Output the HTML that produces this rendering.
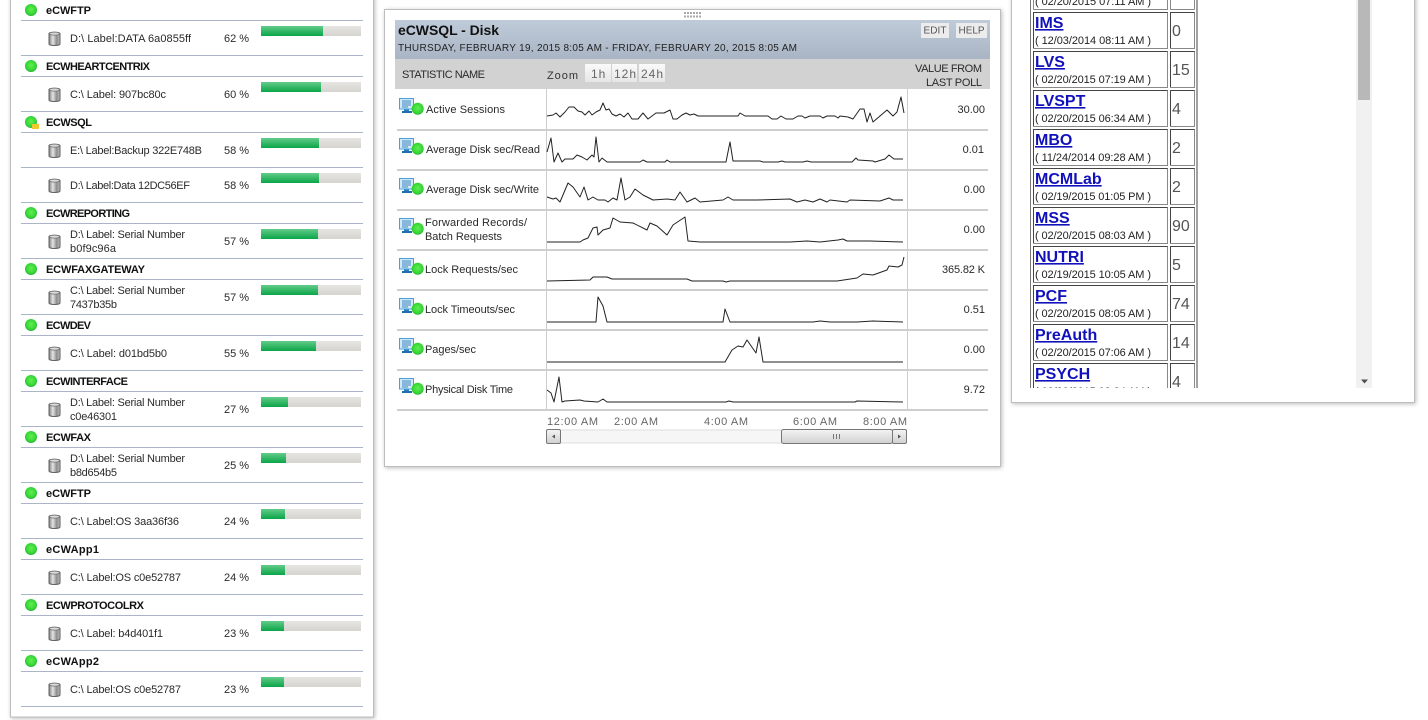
<!DOCTYPE html>
<html><head><meta charset="utf-8"><title>eCWSQL - Disk</title>
<style>
html,body{margin:0;padding:0;background:#fff;width:1428px;height:720px;overflow:hidden}
svg{display:block;position:absolute;left:0;top:0}
text{font-family:"Liberation Sans",Arial,sans-serif;font-size:11px;fill:#2a2a2a}
.h{font-weight:bold;fill:#111;font-size:11px}
.p{fill:#333}
.s{fill:none;stroke:#222;stroke-width:1;stroke-linejoin:round}
.l{font-weight:bold;font-size:16px;fill:#1111bb;text-decoration:underline}
.d{font-size:11px;fill:#222}
.c{font-size:16px;fill:#555}
.t{fill:#666}
.v{text-anchor:end}
</style></head><body>
<svg width="1428" height="720" viewBox="0 0 1428 720" xmlns="http://www.w3.org/2000/svg">
<defs>
<radialGradient id="gb" cx="50%" cy="45%" r="58%"><stop offset="0" stop-color="#62ee50"/><stop offset=".7" stop-color="#35d735"/><stop offset="1" stop-color="#22a838"/></radialGradient>
<linearGradient id="bar" x1="0" y1="0" x2="0" y2="1"><stop offset="0" stop-color="#63cc8a"/><stop offset="1" stop-color="#0aa548"/></linearGradient>
<linearGradient id="trk" x1="0" y1="0" x2="0" y2="1"><stop offset="0" stop-color="#e6e5e2"/><stop offset="1" stop-color="#d5d4cf"/></linearGradient>
<linearGradient id="hd" x1="0" y1="0" x2="0" y2="1"><stop offset="0" stop-color="#bfcbd9"/><stop offset="1" stop-color="#a9b5c4"/></linearGradient>
<linearGradient id="th" x1="0" y1="0" x2="0" y2="1"><stop offset="0" stop-color="#f4f4f4"/><stop offset="1" stop-color="#d0d0d0"/></linearGradient>
<linearGradient id="zb" x1="0" y1="0" x2="0" y2="1"><stop offset="0" stop-color="#fafafa"/><stop offset="1" stop-color="#e6e6e6"/></linearGradient>
<linearGradient id="cy" x1="0" y1="0" x2="1" y2="0"><stop offset="0" stop-color="#7f7f7f"/><stop offset=".35" stop-color="#e4e4e4"/><stop offset=".7" stop-color="#8c8c8c"/><stop offset="1" stop-color="#c0c0c0"/></linearGradient>
<g id="disk"><path d="M.5 2.5C.5 .8 11.5 .8 11.5 2.5V13C11.5 15 .5 15 .5 13Z" fill="url(#cy)" stroke="#5f5f5f"/><ellipse cx="6" cy="2.6" rx="5" ry="1.5" fill="#d8d8d8" stroke="#6f6f6f" stroke-width=".7"/></g>
<circle id="ball" r="6" fill="url(#gb)"/>
<g id="mon"><rect x=".5" y=".5" width="14" height="10.500" fill="#cfe9fa" stroke="#4a9fd8"/><path d="M3 3h9M3 5h9M3 7h9M3 9h6" stroke="#3f86bd"/><rect x="5" y="11.500" width="5" height="1.500" fill="#2a86c0"/><rect x="3" y="13" width="10" height="2" fill="#1c6fa8"/><circle cx="18.700" cy="10.800" r="6" fill="url(#gb)"/></g>
<clipPath id="clipT"><rect x="1025" y="0" width="180" height="388"/></clipPath>
</defs>

<!-- LEFT PANEL -->
<rect x="10.500" y="-5" width="363" height="722" fill="#fff" stroke="#bdbdbd" style="filter:drop-shadow(1px 1px 2px #bbb)"/>
<path d="M21 20.500H363M21 55.500H363M21 76.500H363M21 111.500H363M21 132.500H363M21 167.500H363M21 202.500H363M21 223.500H363M21 258.500H363M21 279.500H363M21 314.500H363M21 335.500H363M21 370.500H363M21 391.500H363M21 426.500H363M21 447.500H363M21 482.500H363M21 503.500H363M21 538.500H363M21 559.500H363M21 594.500H363M21 615.500H363M21 650.500H363M21 671.500H363M21 706.500H363" stroke="#a9b4c8"/>

<use href="#ball" x="31" y="10"/><use href="#ball" x="31" y="66"/><use href="#ball" x="31" y="122"/><rect x="32" y="124" width="7" height="5" fill="#f0c832"/><use href="#ball" x="31" y="213"/><use href="#ball" x="31" y="269"/><use href="#ball" x="31" y="325"/><use href="#ball" x="31" y="381"/><use href="#ball" x="31" y="437"/><use href="#ball" x="31" y="493"/><use href="#ball" x="31" y="549"/><use href="#ball" x="31" y="605"/><use href="#ball" x="31" y="661"/>

<text class="h" x="46" y="14" textLength="45">eCWFTP</text>
<text class="h" x="46" y="70" textLength="104">ECWHEARTCENTRIX</text>
<text class="h" x="46" y="126" textLength="46">ECWSQL</text>
<text class="h" x="46" y="217" textLength="84">ECWREPORTING</text>
<text class="h" x="46" y="273" textLength="99">ECWFAXGATEWAY</text>
<text class="h" x="46" y="329" textLength="45">ECWDEV</text>
<text class="h" x="46" y="385" textLength="82">ECWINTERFACE</text>
<text class="h" x="46" y="441" textLength="45">ECWFAX</text>
<text class="h" x="46" y="497" textLength="45">eCWFTP</text>
<text class="h" x="46" y="553" textLength="53">eCWApp1</text>
<text class="h" x="46" y="609" textLength="98">ECWPROTOCOLRX</text>
<text class="h" x="46" y="665" textLength="53">eCWApp2</text>

<use href="#disk" x="48.500" y="31"/><use href="#disk" x="48.500" y="87"/><use href="#disk" x="48.500" y="143"/><use href="#disk" x="48.500" y="178"/><use href="#disk" x="48.500" y="234"/><use href="#disk" x="48.500" y="290"/><use href="#disk" x="48.500" y="346"/><use href="#disk" x="48.500" y="402"/><use href="#disk" x="48.500" y="458"/><use href="#disk" x="48.500" y="514"/><use href="#disk" x="48.500" y="570"/><use href="#disk" x="48.500" y="626"/><use href="#disk" x="48.500" y="682"/>

<g class="p">
<text x="70" y="42" textLength="121">D:\ Label:DATA 6a0855ff</text>
<text x="70" y="98" textLength="96">C:\ Label: 907bc80c</text>
<text x="70" y="154" textLength="132">E:\ Label:Backup 322E748B</text>
<text x="70" y="189" textLength="120">D:\ Label:Data 12DC56EF</text>
<text x="70" y="238" textLength="115">D:\ Label: Serial Number</text><text x="70" y="252" textLength="46">b0f9c96a</text>
<text x="70" y="294" textLength="115">C:\ Label: Serial Number</text><text x="70" y="308" textLength="47">7437b35b</text>
<text x="70" y="357" textLength="97">C:\ Label: d01bd5b0</text>
<text x="70" y="406" textLength="115">D:\ Label: Serial Number</text><text x="70" y="420" textLength="47">c0e46301</text>
<text x="70" y="462" textLength="115">D:\ Label: Serial Number</text><text x="70" y="476" textLength="47">b8d654b5</text>
<text x="70" y="525" textLength="109">C:\ Label:OS 3aa36f36</text>
<text x="70" y="581" textLength="111">C:\ Label:OS c0e52787</text>
<text x="70" y="637" textLength="93">C:\ Label: b4d401f1</text>
<text x="70" y="693" textLength="111">C:\ Label:OS c0e52787</text>
<text x="224" y="42">62 %</text><text x="224" y="98">60 %</text><text x="224" y="154">58 %</text><text x="224" y="189">58 %</text><text x="224" y="245">57 %</text><text x="224" y="301">57 %</text><text x="224" y="357">55 %</text><text x="224" y="413">27 %</text><text x="224" y="469">25 %</text><text x="224" y="525">24 %</text><text x="224" y="581">24 %</text><text x="224" y="637">23 %</text><text x="224" y="693">23 %</text>
</g>

<g fill="url(#trk)">
<rect x="261" y="26" width="100" height="10"/><rect x="261" y="82" width="100" height="10"/><rect x="261" y="138" width="100" height="10"/><rect x="261" y="173" width="100" height="10"/><rect x="261" y="229" width="100" height="10"/><rect x="261" y="285" width="100" height="10"/><rect x="261" y="341" width="100" height="10"/><rect x="261" y="397" width="100" height="10"/><rect x="261" y="453" width="100" height="10"/><rect x="261" y="509" width="100" height="10"/><rect x="261" y="565" width="100" height="10"/><rect x="261" y="621" width="100" height="10"/><rect x="261" y="677" width="100" height="10"/>
</g>
<g fill="url(#bar)">
<rect x="261" y="26" width="62" height="10"/><rect x="261" y="82" width="60" height="10"/><rect x="261" y="138" width="58" height="10"/><rect x="261" y="173" width="58" height="10"/><rect x="261" y="229" width="57" height="10"/><rect x="261" y="285" width="57" height="10"/><rect x="261" y="341" width="55" height="10"/><rect x="261" y="397" width="27" height="10"/><rect x="261" y="453" width="25" height="10"/><rect x="261" y="509" width="24" height="10"/><rect x="261" y="565" width="24" height="10"/><rect x="261" y="621" width="23" height="10"/><rect x="261" y="677" width="23" height="10"/>
</g>

<!-- CENTER PANEL -->
<rect x="384.500" y="9.500" width="616" height="457" fill="#fff" stroke="#bdbdbd" style="filter:drop-shadow(1px 1px 2px #bbb)"/>
<path d="M684 13H702M684 16.500H702" stroke="#aaa" stroke-width="2" stroke-dasharray="2 1"/>
<rect x="395" y="20" width="595" height="39" fill="url(#hd)"/>
<rect x="395" y="59" width="595" height="30" fill="#d2d2d2"/>
<text x="398" y="35" textLength="101" style="font-size:14px;font-weight:bold;fill:#111">eCWSQL - Disk</text>
<text x="398" y="51" textLength="399" style="font-size:10px;fill:#222">THURSDAY, FEBRUARY 19, 2015 8:05 AM - FRIDAY, FEBRUARY 20, 2015 8:05 AM</text>
<rect x="921" y="23" width="28" height="15" fill="#ececec"/><rect x="956" y="23" width="31" height="15" fill="#ececec"/>
<text x="923.500" y="33.500" textLength="23" style="font-size:10px;fill:#555">EDIT</text>
<text x="958.500" y="33.500" textLength="26" style="font-size:10px;fill:#555">HELP</text>
<text x="402" y="78" textLength="83" style="font-size:11px">STATISTIC NAME</text>
<text x="547" y="79" textLength="31" style="font-size:11px;fill:#333">Zoom</text>
<rect x="585" y="64" width="26" height="18" fill="url(#zb)"/><rect x="612" y="64" width="25" height="18" fill="url(#zb)"/><rect x="639" y="64" width="26" height="18" fill="url(#zb)"/>
<text x="591" y="78" style="font-size:12px;fill:#666;letter-spacing:1px">1h</text>
<text x="614" y="78" style="font-size:12px;fill:#666;letter-spacing:1px">12h</text>
<text x="641" y="78" style="font-size:12px;fill:#666;letter-spacing:1px">24h</text>
<text x="915" y="72" textLength="67" style="font-size:11px">VALUE FROM</text>
<text x="926" y="86" textLength="56" style="font-size:11px">LAST POLL</text>

<path d="M397 130H988M397 170H988M397 210H988M397 250H988M397 290H988M397 330H988M397 370H988M397 410H988" stroke="#cfcfcf" stroke-width="2"/>
<path d="M546.500 89V409M907.500 89V409" stroke="#cdcdcd"/>

<use href="#mon" x="399" y="98"/><use href="#mon" x="399" y="138"/><use href="#mon" x="399" y="178"/><use href="#mon" x="399" y="218"/><use href="#mon" x="399" y="258"/><use href="#mon" x="399" y="298"/><use href="#mon" x="399" y="338"/><use href="#mon" x="399" y="378"/>

<text x="426" y="113" textLength="79">Active Sessions</text>
<text x="426" y="153" textLength="114">Average Disk sec/Read</text>
<text x="426" y="193" textLength="113">Average Disk sec/Write</text>
<text x="425" y="226" textLength="102">Forwarded Records/</text><text x="425" y="240" textLength="77">Batch Requests</text>
<text x="425" y="273" textLength="93">Lock Requests/sec</text>
<text x="425" y="313" textLength="90">Lock Timeouts/sec</text>
<text x="425" y="353" textLength="51">Pages/sec</text>
<text x="425" y="393" textLength="88">Physical Disk Time</text>

<text class="v" x="985" y="113">30.00</text>
<text class="v" x="984" y="153">0.01</text>
<text class="v" x="985" y="193">0.00</text>
<text class="v" x="985" y="233">0.00</text>
<text x="942" y="273" textLength="43">365.82 K</text>
<text class="v" x="985" y="313">0.51</text>
<text class="v" x="985" y="353">0.00</text>
<text class="v" x="985" y="393">9.72</text>

<polyline class="s" points="547,116 553,115 556,113 560,117 565,112 569,107 574,107 578,111 582,112 585,115 589,111 592,115 596,112 600,110 603,103 606,110 609,109 612,114 616,116 620,114 624,117 628,113 632,119 638,119 643,113 648,119 652,116 656,113 664,113 670,110 673,119 677,119 682,115 686,113 690,115 694,114 698,116 738,116 740,113 745,116 768,116 772,119 777,119 781,116 786,119 793,119 798,116 802,116 805,118 810,116 820,116 823,118 827,116 835,116 838,118 840,116 848,117 853,119 860,109 864,109 867,122 870,113 873,122 887,110 893,116 897,112 901,97 904,113"/>
<polyline class="s" points="547,152 551,138 554,162 558,153 562,162 565,159 573,159 577,155 582,157 587,160 592,155 594,157 596,137 599,162 602,158 607,162 640,162 643,160 647,162 665,162 667,160 670,162 726,162 730,142 733,161 760,161 763,162 778,162 782,161 785,162 803,162 807,161 811,162 852,162 856,158 858,160 873,161 875,162 885,159 889,155 894,159 903,159"/>
<polyline class="s" points="547,197 553,199 556,198 560,202 568,183 573,187 580,197 584,187 588,200 593,197 598,200 605,200 608,202 613,198 617,200 621,178 625,200 630,197 635,189 643,195 653,200 667,199 675,200 680,192 687,202 695,198 700,202 723,200 728,197 733,200 757,200 790,199 797,202 805,200 813,202 820,199 827,202 830,200 847,202 850,200 880,201 889,198 893,200 903,200"/>
<polyline class="s" points="547,242 580,242 583,240 588,238 593,228 597,227 598,235 603,230 610,228 613,218 620,222 633,223 647,230 650,223 657,226 667,235 673,225 685,217 688,241 700,242 760,242 790,242 807,241 820,242 838,240 843,239 847,241 870,241 903,242"/>
<polyline class="s" points="547,281 590,280 593,277 607,277 612,279 687,279 692,281 723,281 726,282 730,281 817,281 837,281 857,278 863,274 873,275 887,270 889,266 898,267 902,265 904,257"/>
<polyline class="s" points="547,322 596,322 598,297 603,306 607,322 723,322 725,309 730,322 813,322 820,321 830,322 857,322 873,321 903,322"/>
<polyline class="s" points="547,362 725,362 732,350 738,346 743,347 747,340 756,353 759,337 763,362 903,362"/>
<polyline class="s" points="547,390 551,393 554,402 559,377 562,402 565,401 580,400 584,401 598,402 603,399 607,402 726,402 729,401 733,402 855,402 857,401 903,402"/>

<text class="t" x="547" y="425" textLength="51">12:00 AM</text>
<text class="t" x="614" y="425" textLength="44">2:00 AM</text>
<text class="t" x="704" y="425" textLength="44">4:00 AM</text>
<text class="t" x="793" y="425" textLength="44">6:00 AM</text>
<text class="t" x="863" y="425" textLength="44">8:00 AM</text>

<rect x="547" y="430" width="359" height="13" fill="#f6f6f6" stroke="#ddd"/>
<rect x="546.500" y="429.500" width="14" height="14" rx="1.500" fill="url(#th)" stroke="#777"/>
<path d="M555 434.500V438.500L552 436.500Z" fill="#555"/>
<rect x="781.500" y="429.500" width="111" height="14" rx="2" fill="url(#th)" stroke="#777"/>
<path d="M833.500 434V439M836.500 434V439M839.500 434V439" stroke="#777"/>
<rect x="892.500" y="429.500" width="14" height="14" rx="1.500" fill="url(#th)" stroke="#777"/>
<path d="M898 434.500V438.500L901 436.500Z" fill="#555"/>

<!-- RIGHT PANEL -->
<rect x="1011.500" y="-5" width="403" height="407.500" fill="#fff" stroke="#bdbdbd" style="filter:drop-shadow(1px 1px 2px #bbb)"/>
<rect x="1356" y="0" width="16" height="388" fill="#f1f1f1"/>
<rect x="1358" y="0" width="12" height="100" fill="#b8b8b8"/>
<path d="M1361 379.500H1368L1364.500 383.500Z" fill="#505050"/>

<g clip-path="url(#clipT)">
<path d="M1030.500 -5V400" stroke="#777" fill="none"/><path d="M1197 -5V400" stroke="#444" fill="none"/>
<g fill="none">
<path d="M1033.500 9.500H1168M1170.500 9.500H1194.500M1033.500 -5V9.500M1167.500 -5V9.500M1170.500 -5V9.500M1194.500 -5V9.500" stroke="#888"/>
<path d="M1033.500 48.500V12.500H1168M1170.500 48.500V12.500H1195" stroke="#444"/><path d="M1033.500 48.500H1167.500V12.500M1170.500 48.500H1194.500V12.500" stroke="#888"/>
<path d="M1033.500 87.500V51.500H1168M1170.500 87.500V51.500H1195" stroke="#444"/><path d="M1033.500 87.500H1167.500V51.500M1170.500 87.500H1194.500V51.500" stroke="#888"/>
<path d="M1033.500 126.500V90.500H1168M1170.500 126.500V90.500H1195" stroke="#444"/><path d="M1033.500 126.500H1167.500V90.500M1170.500 126.500H1194.500V90.500" stroke="#888"/>
<path d="M1033.500 165.500V129.500H1168M1170.500 165.500V129.500H1195" stroke="#444"/><path d="M1033.500 165.500H1167.500V129.500M1170.500 165.500H1194.500V129.500" stroke="#888"/>
<path d="M1033.500 204.500V168.500H1168M1170.500 204.500V168.500H1195" stroke="#444"/><path d="M1033.500 204.500H1167.500V168.500M1170.500 204.500H1194.500V168.500" stroke="#888"/>
<path d="M1033.500 243.500V207.500H1168M1170.500 243.500V207.500H1195" stroke="#444"/><path d="M1033.500 243.500H1167.500V207.500M1170.500 243.500H1194.500V207.500" stroke="#888"/>
<path d="M1033.500 282.500V246.500H1168M1170.500 282.500V246.500H1195" stroke="#444"/><path d="M1033.500 282.500H1167.500V246.500M1170.500 282.500H1194.500V246.500" stroke="#888"/>
<path d="M1033.500 321.500V285.500H1168M1170.500 321.500V285.500H1195" stroke="#444"/><path d="M1033.500 321.500H1167.500V285.500M1170.500 321.500H1194.500V285.500" stroke="#888"/>
<path d="M1033.500 360.500V324.500H1168M1170.500 360.500V324.500H1195" stroke="#444"/><path d="M1033.500 360.500H1167.500V324.500M1170.500 360.500H1194.500V324.500" stroke="#888"/>
<path d="M1033.500 399.500V363.500H1168M1170.500 399.500V363.500H1195" stroke="#444"/><path d="M1167.500 399.500V363.500M1194.500 399.500V363.500" stroke="#888"/>
</g>
<text class="d" x="1035" y="5" textLength="116">( 02/20/2015 07:11 AM )</text>
<text class="l" x="1035" y="28">IMS</text><text class="d" x="1035" y="44" textLength="116">( 12/03/2014 08:11 AM )</text><text class="c" x="1172" y="36">0</text>
<text class="l" x="1035" y="67">LVS</text><text class="d" x="1035" y="83" textLength="116">( 02/20/2015 07:19 AM )</text><text class="c" x="1172" y="75">15</text>
<text class="l" x="1035" y="106">LVSPT</text><text class="d" x="1035" y="122" textLength="116">( 02/20/2015 06:34 AM )</text><text class="c" x="1172" y="114">4</text>
<text class="l" x="1035" y="145">MBO</text><text class="d" x="1035" y="161" textLength="116">( 11/24/2014 09:28 AM )</text><text class="c" x="1172" y="153">2</text>
<text class="l" x="1035" y="184">MCMLab</text><text class="d" x="1035" y="200" textLength="116">( 02/19/2015 01:05 PM )</text><text class="c" x="1172" y="192">2</text>
<text class="l" x="1035" y="223">MSS</text><text class="d" x="1035" y="239" textLength="116">( 02/20/2015 08:03 AM )</text><text class="c" x="1172" y="231">90</text>
<text class="l" x="1035" y="262">NUTRI</text><text class="d" x="1035" y="278" textLength="116">( 02/19/2015 10:05 AM )</text><text class="c" x="1172" y="270">5</text>
<text class="l" x="1035" y="301">PCF</text><text class="d" x="1035" y="317" textLength="116">( 02/20/2015 08:05 AM )</text><text class="c" x="1172" y="309">74</text>
<text class="l" x="1035" y="340">PreAuth</text><text class="d" x="1035" y="356" textLength="116">( 02/20/2015 07:06 AM )</text><text class="c" x="1172" y="348">14</text>
<text class="l" x="1035" y="379">PSYCH</text><text class="d" x="1035" y="395" textLength="116">( 02/20/2015 08:34 AM )</text><text class="c" x="1172" y="387">4</text>
</g>
</svg>
</body></html>
